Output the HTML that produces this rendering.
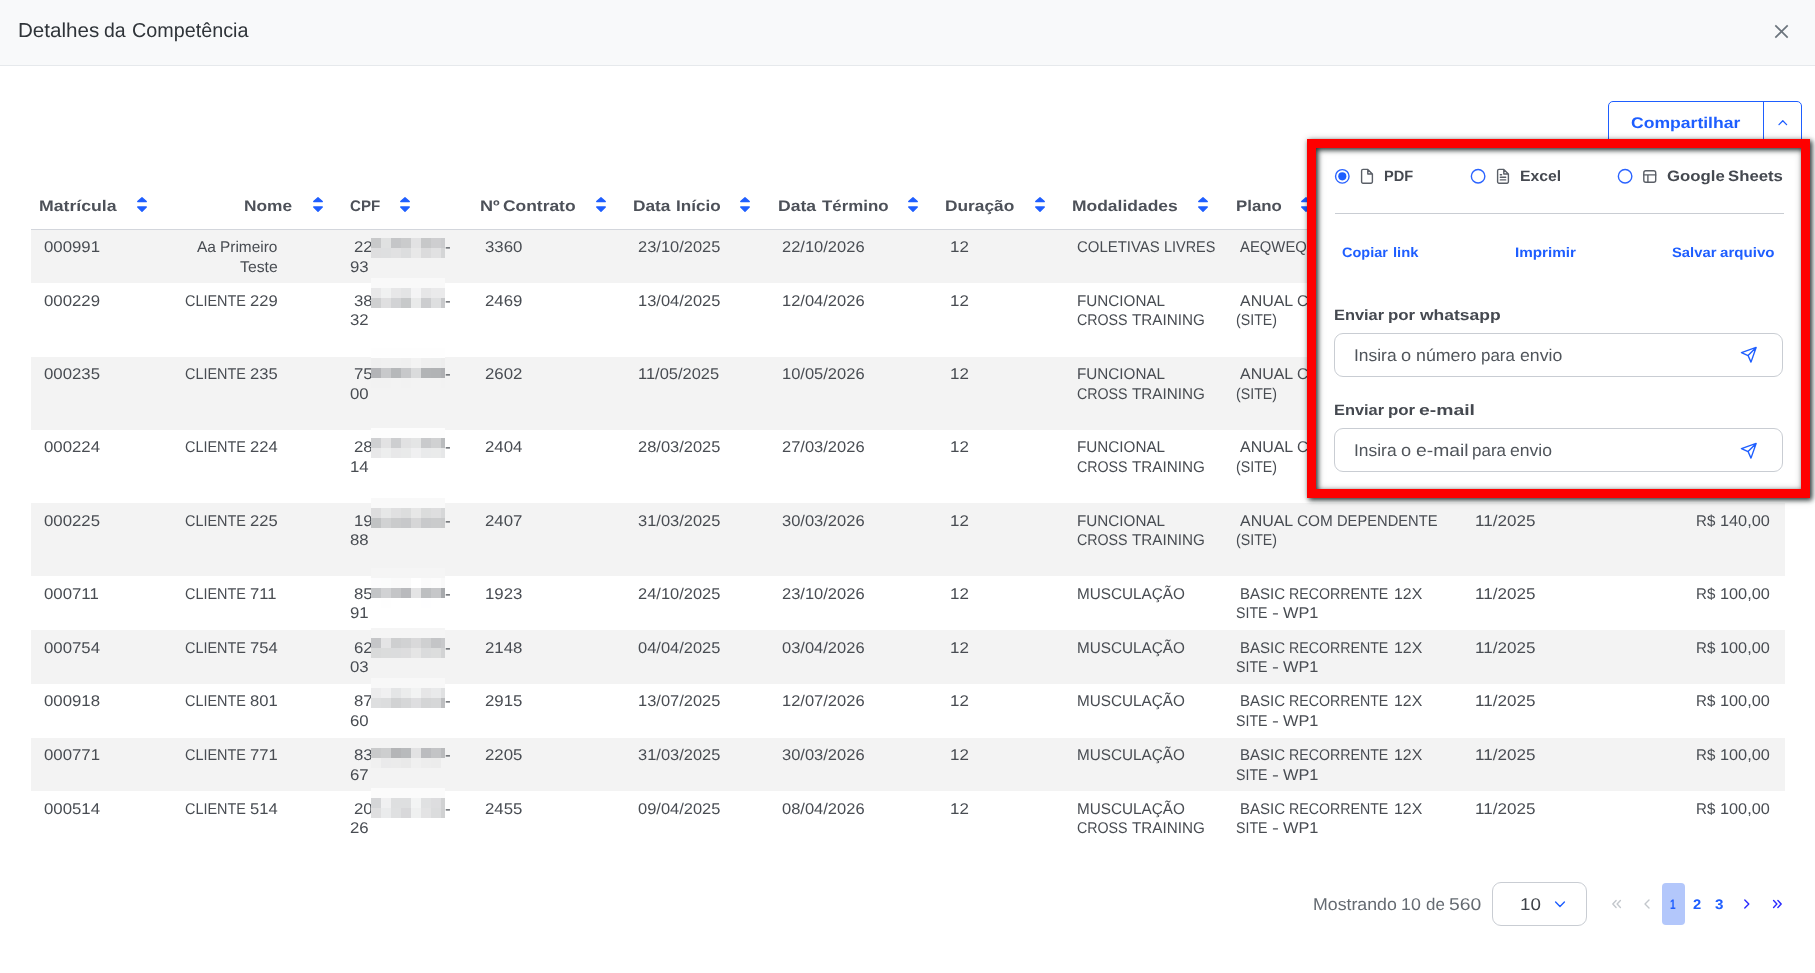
<!DOCTYPE html><html lang="pt-BR"><head><meta charset="utf-8"><title>Detalhes da Competência</title><style>
html,body{margin:0;padding:0}
body{width:1815px;height:973px;position:relative;overflow:hidden;background:#fff;font-family:"Liberation Sans",sans-serif;color:#4b4f55}
.a{position:absolute}
.t{position:absolute;white-space:pre;text-rendering:geometricPrecision;line-height:20px;transform-origin:0 50%;color:#484c52}
.mz i{position:absolute;display:block}
.pb{font-weight:bold}
.title{color:#2f3439}
.hd{color:#4d5159}
.blue{color:#1e5eff}
.lbl{color:#454950}
.ph{color:#50555b}
.most{color:#656b72}
.sel{color:#3f4349}
</style></head><body>
<header class="modal-header">
<div class="a" style="left:0;top:0;width:1815px;height:65px;background:#f8f9fa;border-bottom:1px solid #e6e9ec"></div>
<span class="t title" style="left:17.90px;top:21px;font-size:20.2px;transform:scaleX(1.0201);">Detalhes</span>
<span class="t title" style="left:104.12px;top:21px;font-size:20.2px;transform:scaleX(0.9647);">da</span>
<span class="t title" style="left:132.11px;top:21px;font-size:20.2px;transform:scaleX(0.9785);">Competência</span>
<svg class="a" style="left:1773px;top:23px" width="17" height="17" viewBox="0 0 17 17"><path d="M2.3 2.3 L14.7 14.7 M14.7 2.3 L2.3 14.7" stroke="#6c757d" stroke-width="1.7" fill="none"/></svg>
</header>
<div class="share-button">
<div class="a" style="left:1608px;top:101px;width:192px;height:44px;border:1px solid #1e5eff;border-radius:5px;background:#fff"></div>
<div class="a" style="left:1763px;top:101px;width:1px;height:44px;background:#1e5eff"></div>
<span class="t pb blue" style="left:1631.13px;top:114px;font-size:15.5px;transform:scaleX(1.1336);">Compartilhar</span>
<svg class="a" style="left:1775px;top:116px" width="16" height="12" viewBox="0 0 16 12"><path d="M4 8.6 L7.8 4.8 L11.6 8.6" stroke="#1e5eff" stroke-width="1.3" fill="none" stroke-linecap="round" stroke-linejoin="round"/></svg>
</div>
<main class="grid">
<div class="thead">
<span class="t pb hd" style="left:38.56px;top:197px;font-size:15.4px;transform:scaleX(1.1481);">Matrícula</span>
<span class="t pb hd" style="left:244.38px;top:197px;font-size:15.4px;transform:scaleX(1.1250);">Nome</span>
<span class="t pb hd" style="left:350.15px;top:197px;font-size:15.4px;transform:scaleX(0.9805);">CPF</span>
<span class="t pb hd" style="left:480.13px;top:197px;font-size:15.4px;transform:scaleX(1.1755);">Nº</span>
<span class="t pb hd" style="left:503.35px;top:197px;font-size:15.4px;transform:scaleX(1.1314);">Contrato</span>
<span class="t pb hd" style="left:632.98px;top:197px;font-size:15.4px;transform:scaleX(1.1236);">Data</span>
<span class="t pb hd" style="left:675.99px;top:197px;font-size:15.4px;transform:scaleX(1.1090);">Início</span>
<span class="t pb hd" style="left:777.86px;top:197px;font-size:15.4px;transform:scaleX(1.1421);">Data</span>
<span class="t pb hd" style="left:821.63px;top:197px;font-size:15.4px;transform:scaleX(1.0946);">Término</span>
<span class="t pb hd" style="left:945.48px;top:197px;font-size:15.4px;transform:scaleX(1.1250);">Duração</span>
<span class="t pb hd" style="left:1072.37px;top:197px;font-size:15.4px;transform:scaleX(1.1341);">Modalidades</span>
<span class="t pb hd" style="left:1235.71px;top:197px;font-size:15.4px;transform:scaleX(1.0927);">Plano</span>
<svg class="a" style="left:136.1px;top:195.5px" width="12" height="18" viewBox="0 0 12 18"><path d="M6 1.7 L10.3 5.6 H1.7 Z M6 15.4 L10.3 11 H1.7 Z" fill="#1e5eff" stroke="#1e5eff" stroke-width="1.3" stroke-linejoin="round"/></svg>
<svg class="a" style="left:311.5px;top:195.5px" width="12" height="18" viewBox="0 0 12 18"><path d="M6 1.7 L10.3 5.6 H1.7 Z M6 15.4 L10.3 11 H1.7 Z" fill="#1e5eff" stroke="#1e5eff" stroke-width="1.3" stroke-linejoin="round"/></svg>
<svg class="a" style="left:399.4px;top:195.5px" width="12" height="18" viewBox="0 0 12 18"><path d="M6 1.7 L10.3 5.6 H1.7 Z M6 15.4 L10.3 11 H1.7 Z" fill="#1e5eff" stroke="#1e5eff" stroke-width="1.3" stroke-linejoin="round"/></svg>
<svg class="a" style="left:594.7px;top:195.5px" width="12" height="18" viewBox="0 0 12 18"><path d="M6 1.7 L10.3 5.6 H1.7 Z M6 15.4 L10.3 11 H1.7 Z" fill="#1e5eff" stroke="#1e5eff" stroke-width="1.3" stroke-linejoin="round"/></svg>
<svg class="a" style="left:739.1px;top:195.5px" width="12" height="18" viewBox="0 0 12 18"><path d="M6 1.7 L10.3 5.6 H1.7 Z M6 15.4 L10.3 11 H1.7 Z" fill="#1e5eff" stroke="#1e5eff" stroke-width="1.3" stroke-linejoin="round"/></svg>
<svg class="a" style="left:906.9px;top:195.5px" width="12" height="18" viewBox="0 0 12 18"><path d="M6 1.7 L10.3 5.6 H1.7 Z M6 15.4 L10.3 11 H1.7 Z" fill="#1e5eff" stroke="#1e5eff" stroke-width="1.3" stroke-linejoin="round"/></svg>
<svg class="a" style="left:1034.0px;top:195.5px" width="12" height="18" viewBox="0 0 12 18"><path d="M6 1.7 L10.3 5.6 H1.7 Z M6 15.4 L10.3 11 H1.7 Z" fill="#1e5eff" stroke="#1e5eff" stroke-width="1.3" stroke-linejoin="round"/></svg>
<svg class="a" style="left:1196.9px;top:195.5px" width="12" height="18" viewBox="0 0 12 18"><path d="M6 1.7 L10.3 5.6 H1.7 Z M6 15.4 L10.3 11 H1.7 Z" fill="#1e5eff" stroke="#1e5eff" stroke-width="1.3" stroke-linejoin="round"/></svg>
<svg class="a" style="left:1300.0px;top:195.5px" width="12" height="18" viewBox="0 0 12 18"><path d="M6 1.7 L10.3 5.6 H1.7 Z M6 15.4 L10.3 11 H1.7 Z" fill="#1e5eff" stroke="#1e5eff" stroke-width="1.3" stroke-linejoin="round"/></svg>
<div class="a" style="left:31px;top:229px;width:1754px;height:1.3px;background:#d3d6dc"></div>
</div>
<div class="tr">
<div class="a" style="left:31px;top:230px;width:1754px;height:52.8px;background:#f3f3f3"></div>
<span class="t c" style="left:43.60px;top:238px;font-size:15.5px;transform:scaleX(1.0820);">000991</span>
<span class="t c" style="left:196.78px;top:238px;font-size:15.5px;transform:scaleX(1.0008);">Aa</span>
<span class="t c" style="left:220.48px;top:238px;font-size:15.5px;transform:scaleX(0.9943);">Primeiro</span>
<span class="t c" style="left:240.22px;top:258px;font-size:15.5px;transform:scaleX(1.0163);">Teste</span>
<span class="t c" style="left:354.47px;top:238px;font-size:15.5px;transform:scaleX(1.0820);">22</span>
<span class="t c" style="left:445.43px;top:238px;font-size:15.5px;transform:scaleX(1.1099);">-</span>
<span class="t c" style="left:349.79px;top:258px;font-size:15.5px;transform:scaleX(1.0820);">93</span>
<span class="t c" style="left:484.65px;top:238px;font-size:15.5px;transform:scaleX(1.0851);">3360</span>
<span class="t c" style="left:637.79px;top:238px;font-size:15.5px;transform:scaleX(1.0617);">23/10/2025</span>
<span class="t c" style="left:782.09px;top:238px;font-size:15.5px;transform:scaleX(1.0645);">22/10/2026</span>
<span class="t c" style="left:949.61px;top:238px;font-size:15.5px;transform:scaleX(1.0938);">12</span>
<span class="t c" style="left:1077.06px;top:238px;font-size:15.5px;transform:scaleX(0.9627);">COLETIVAS</span>
<span class="t c" style="left:1163.87px;top:238px;font-size:15.5px;transform:scaleX(0.9306);">LIVRES</span>
<span class="t c" style="left:1240.20px;top:238px;font-size:15.5px;transform:scaleX(0.9583);">AEQWEQ</span>
</div>
<div class="tr">
<span class="t c" style="left:43.60px;top:292px;font-size:15.5px;transform:scaleX(1.0820);">000229</span>
<span class="t c" style="left:185.18px;top:292px;font-size:15.5px;transform:scaleX(0.9303);">CLIENTE</span>
<span class="t c" style="left:250.08px;top:292px;font-size:15.5px;transform:scaleX(1.0698);">229</span>
<span class="t c" style="left:354.47px;top:292px;font-size:15.5px;transform:scaleX(1.0820);">38</span>
<span class="t c" style="left:445.43px;top:292px;font-size:15.5px;transform:scaleX(1.1099);">-</span>
<span class="t c" style="left:349.79px;top:311px;font-size:15.5px;transform:scaleX(1.0820);">32</span>
<span class="t c" style="left:484.65px;top:292px;font-size:15.5px;transform:scaleX(1.0851);">2469</span>
<span class="t c" style="left:637.79px;top:292px;font-size:15.5px;transform:scaleX(1.0617);">13/04/2025</span>
<span class="t c" style="left:782.09px;top:292px;font-size:15.5px;transform:scaleX(1.0645);">12/04/2026</span>
<span class="t c" style="left:949.61px;top:292px;font-size:15.5px;transform:scaleX(1.0938);">12</span>
<span class="t c" style="left:1077.00px;top:292px;font-size:15.5px;transform:scaleX(0.9827);">FUNCIONAL</span>
<span class="t c" style="left:1077.44px;top:311px;font-size:15.5px;transform:scaleX(0.9181);">CROSS</span>
<span class="t c" style="left:1132.04px;top:311px;font-size:15.5px;transform:scaleX(0.9827);">TRAINING</span>
<span class="t c" style="left:1240.17px;top:292px;font-size:15.5px;transform:scaleX(1.0289);">ANUAL</span>
<span class="t c" style="left:1297.24px;top:292px;font-size:15.5px;transform:scaleX(0.9900);">COM</span>
<span class="t c" style="left:1336.64px;top:292px;font-size:15.5px;transform:scaleX(0.9484);">DEPENDENTE</span>
<span class="t c" style="left:1236.39px;top:311px;font-size:15.5px;transform:scaleX(0.9152);">(SITE)</span>
<span class="t c" style="left:1474.81px;top:292px;font-size:15.5px;transform:scaleX(1.1007);">11/2025</span>
<span class="t c" style="left:1696.41px;top:292px;font-size:15.5px;transform:scaleX(0.9724);">R$</span>
<span class="t c" style="left:1720.07px;top:292px;font-size:15.5px;transform:scaleX(1.0504);">140,00</span>
</div>
<div class="tr">
<div class="a" style="left:31px;top:357px;width:1754px;height:73.0px;background:#f3f3f3"></div>
<span class="t c" style="left:43.60px;top:365px;font-size:15.5px;transform:scaleX(1.0820);">000235</span>
<span class="t c" style="left:185.18px;top:365px;font-size:15.5px;transform:scaleX(0.9303);">CLIENTE</span>
<span class="t c" style="left:250.08px;top:365px;font-size:15.5px;transform:scaleX(1.0698);">235</span>
<span class="t c" style="left:354.47px;top:365px;font-size:15.5px;transform:scaleX(1.0820);">75</span>
<span class="t c" style="left:445.43px;top:365px;font-size:15.5px;transform:scaleX(1.1099);">-</span>
<span class="t c" style="left:349.79px;top:385px;font-size:15.5px;transform:scaleX(1.0820);">00</span>
<span class="t c" style="left:484.65px;top:365px;font-size:15.5px;transform:scaleX(1.0851);">2602</span>
<span class="t c" style="left:637.79px;top:365px;font-size:15.5px;transform:scaleX(1.0617);">11/05/2025</span>
<span class="t c" style="left:782.09px;top:365px;font-size:15.5px;transform:scaleX(1.0645);">10/05/2026</span>
<span class="t c" style="left:949.61px;top:365px;font-size:15.5px;transform:scaleX(1.0938);">12</span>
<span class="t c" style="left:1077.00px;top:365px;font-size:15.5px;transform:scaleX(0.9827);">FUNCIONAL</span>
<span class="t c" style="left:1077.44px;top:385px;font-size:15.5px;transform:scaleX(0.9181);">CROSS</span>
<span class="t c" style="left:1132.04px;top:385px;font-size:15.5px;transform:scaleX(0.9827);">TRAINING</span>
<span class="t c" style="left:1240.17px;top:365px;font-size:15.5px;transform:scaleX(1.0289);">ANUAL</span>
<span class="t c" style="left:1297.24px;top:365px;font-size:15.5px;transform:scaleX(0.9900);">COM</span>
<span class="t c" style="left:1336.64px;top:365px;font-size:15.5px;transform:scaleX(0.9484);">DEPENDENTE</span>
<span class="t c" style="left:1236.39px;top:385px;font-size:15.5px;transform:scaleX(0.9152);">(SITE)</span>
<span class="t c" style="left:1474.81px;top:365px;font-size:15.5px;transform:scaleX(1.1007);">11/2025</span>
<span class="t c" style="left:1696.41px;top:365px;font-size:15.5px;transform:scaleX(0.9724);">R$</span>
<span class="t c" style="left:1720.07px;top:365px;font-size:15.5px;transform:scaleX(1.0504);">140,00</span>
</div>
<div class="tr">
<span class="t c" style="left:43.60px;top:438px;font-size:15.5px;transform:scaleX(1.0820);">000224</span>
<span class="t c" style="left:185.18px;top:438px;font-size:15.5px;transform:scaleX(0.9303);">CLIENTE</span>
<span class="t c" style="left:250.08px;top:438px;font-size:15.5px;transform:scaleX(1.0698);">224</span>
<span class="t c" style="left:354.47px;top:438px;font-size:15.5px;transform:scaleX(1.0820);">28</span>
<span class="t c" style="left:445.43px;top:438px;font-size:15.5px;transform:scaleX(1.1099);">-</span>
<span class="t c" style="left:349.79px;top:458px;font-size:15.5px;transform:scaleX(1.0820);">14</span>
<span class="t c" style="left:484.65px;top:438px;font-size:15.5px;transform:scaleX(1.0851);">2404</span>
<span class="t c" style="left:637.79px;top:438px;font-size:15.5px;transform:scaleX(1.0617);">28/03/2025</span>
<span class="t c" style="left:782.09px;top:438px;font-size:15.5px;transform:scaleX(1.0645);">27/03/2026</span>
<span class="t c" style="left:949.61px;top:438px;font-size:15.5px;transform:scaleX(1.0938);">12</span>
<span class="t c" style="left:1077.00px;top:438px;font-size:15.5px;transform:scaleX(0.9827);">FUNCIONAL</span>
<span class="t c" style="left:1077.44px;top:458px;font-size:15.5px;transform:scaleX(0.9181);">CROSS</span>
<span class="t c" style="left:1132.04px;top:458px;font-size:15.5px;transform:scaleX(0.9827);">TRAINING</span>
<span class="t c" style="left:1240.17px;top:438px;font-size:15.5px;transform:scaleX(1.0289);">ANUAL</span>
<span class="t c" style="left:1297.24px;top:438px;font-size:15.5px;transform:scaleX(0.9900);">COM</span>
<span class="t c" style="left:1336.64px;top:438px;font-size:15.5px;transform:scaleX(0.9484);">DEPENDENTE</span>
<span class="t c" style="left:1236.39px;top:458px;font-size:15.5px;transform:scaleX(0.9152);">(SITE)</span>
<span class="t c" style="left:1474.81px;top:438px;font-size:15.5px;transform:scaleX(1.1007);">11/2025</span>
<span class="t c" style="left:1696.41px;top:438px;font-size:15.5px;transform:scaleX(0.9724);">R$</span>
<span class="t c" style="left:1720.07px;top:438px;font-size:15.5px;transform:scaleX(1.0504);">140,00</span>
</div>
<div class="tr">
<div class="a" style="left:31px;top:503px;width:1754px;height:72.8px;background:#f3f3f3"></div>
<span class="t c" style="left:43.60px;top:512px;font-size:15.5px;transform:scaleX(1.0820);">000225</span>
<span class="t c" style="left:185.18px;top:512px;font-size:15.5px;transform:scaleX(0.9303);">CLIENTE</span>
<span class="t c" style="left:250.08px;top:512px;font-size:15.5px;transform:scaleX(1.0698);">225</span>
<span class="t c" style="left:354.47px;top:512px;font-size:15.5px;transform:scaleX(1.0820);">19</span>
<span class="t c" style="left:445.43px;top:512px;font-size:15.5px;transform:scaleX(1.1099);">-</span>
<span class="t c" style="left:349.79px;top:531px;font-size:15.5px;transform:scaleX(1.0820);">88</span>
<span class="t c" style="left:484.65px;top:512px;font-size:15.5px;transform:scaleX(1.0851);">2407</span>
<span class="t c" style="left:637.79px;top:512px;font-size:15.5px;transform:scaleX(1.0617);">31/03/2025</span>
<span class="t c" style="left:782.09px;top:512px;font-size:15.5px;transform:scaleX(1.0645);">30/03/2026</span>
<span class="t c" style="left:949.61px;top:512px;font-size:15.5px;transform:scaleX(1.0938);">12</span>
<span class="t c" style="left:1077.00px;top:512px;font-size:15.5px;transform:scaleX(0.9827);">FUNCIONAL</span>
<span class="t c" style="left:1077.44px;top:531px;font-size:15.5px;transform:scaleX(0.9181);">CROSS</span>
<span class="t c" style="left:1132.04px;top:531px;font-size:15.5px;transform:scaleX(0.9827);">TRAINING</span>
<span class="t c" style="left:1240.17px;top:512px;font-size:15.5px;transform:scaleX(1.0289);">ANUAL</span>
<span class="t c" style="left:1297.24px;top:512px;font-size:15.5px;transform:scaleX(0.9900);">COM</span>
<span class="t c" style="left:1336.64px;top:512px;font-size:15.5px;transform:scaleX(0.9484);">DEPENDENTE</span>
<span class="t c" style="left:1236.39px;top:531px;font-size:15.5px;transform:scaleX(0.9152);">(SITE)</span>
<span class="t c" style="left:1474.81px;top:512px;font-size:15.5px;transform:scaleX(1.1007);">11/2025</span>
<span class="t c" style="left:1696.41px;top:512px;font-size:15.5px;transform:scaleX(0.9724);">R$</span>
<span class="t c" style="left:1720.07px;top:512px;font-size:15.5px;transform:scaleX(1.0504);">140,00</span>
</div>
<div class="tr">
<span class="t c" style="left:43.60px;top:585px;font-size:15.5px;transform:scaleX(1.0820);">000711</span>
<span class="t c" style="left:185.18px;top:585px;font-size:15.5px;transform:scaleX(0.9303);">CLIENTE</span>
<span class="t c" style="left:250.08px;top:585px;font-size:15.5px;transform:scaleX(1.0698);">711</span>
<span class="t c" style="left:354.47px;top:585px;font-size:15.5px;transform:scaleX(1.0820);">85</span>
<span class="t c" style="left:445.43px;top:585px;font-size:15.5px;transform:scaleX(1.1099);">-</span>
<span class="t c" style="left:349.79px;top:604px;font-size:15.5px;transform:scaleX(1.0820);">91</span>
<span class="t c" style="left:484.65px;top:585px;font-size:15.5px;transform:scaleX(1.0851);">1923</span>
<span class="t c" style="left:637.79px;top:585px;font-size:15.5px;transform:scaleX(1.0617);">24/10/2025</span>
<span class="t c" style="left:782.09px;top:585px;font-size:15.5px;transform:scaleX(1.0645);">23/10/2026</span>
<span class="t c" style="left:949.61px;top:585px;font-size:15.5px;transform:scaleX(1.0938);">12</span>
<span class="t c" style="left:1076.79px;top:585px;font-size:15.5px;transform:scaleX(0.9861);">MUSCULAÇÃO</span>
<span class="t c" style="left:1240.31px;top:585px;font-size:15.5px;transform:scaleX(0.9698);">BASIC</span>
<span class="t c" style="left:1289.39px;top:585px;font-size:15.5px;transform:scaleX(0.9147);">RECORRENTE</span>
<span class="t c" style="left:1393.60px;top:585px;font-size:15.5px;transform:scaleX(1.0242);">12X</span>
<span class="t c" style="left:1235.99px;top:604px;font-size:15.5px;transform:scaleX(0.9134);">SITE</span>
<span class="t c" style="left:1271.56px;top:604px;font-size:15.5px;transform:scaleX(1.3319);">-</span>
<span class="t c" style="left:1282.74px;top:604px;font-size:15.5px;transform:scaleX(1.0557);">WP1</span>
<span class="t c" style="left:1474.81px;top:585px;font-size:15.5px;transform:scaleX(1.1007);">11/2025</span>
<span class="t c" style="left:1696.41px;top:585px;font-size:15.5px;transform:scaleX(0.9724);">R$</span>
<span class="t c" style="left:1720.07px;top:585px;font-size:15.5px;transform:scaleX(1.0504);">100,00</span>
</div>
<div class="tr">
<div class="a" style="left:31px;top:630px;width:1754px;height:54.0px;background:#f3f3f3"></div>
<span class="t c" style="left:43.60px;top:639px;font-size:15.5px;transform:scaleX(1.0820);">000754</span>
<span class="t c" style="left:185.18px;top:639px;font-size:15.5px;transform:scaleX(0.9303);">CLIENTE</span>
<span class="t c" style="left:250.08px;top:639px;font-size:15.5px;transform:scaleX(1.0698);">754</span>
<span class="t c" style="left:354.47px;top:639px;font-size:15.5px;transform:scaleX(1.0820);">62</span>
<span class="t c" style="left:445.43px;top:639px;font-size:15.5px;transform:scaleX(1.1099);">-</span>
<span class="t c" style="left:349.79px;top:658px;font-size:15.5px;transform:scaleX(1.0820);">03</span>
<span class="t c" style="left:484.65px;top:639px;font-size:15.5px;transform:scaleX(1.0851);">2148</span>
<span class="t c" style="left:637.79px;top:639px;font-size:15.5px;transform:scaleX(1.0617);">04/04/2025</span>
<span class="t c" style="left:782.09px;top:639px;font-size:15.5px;transform:scaleX(1.0645);">03/04/2026</span>
<span class="t c" style="left:949.61px;top:639px;font-size:15.5px;transform:scaleX(1.0938);">12</span>
<span class="t c" style="left:1076.79px;top:639px;font-size:15.5px;transform:scaleX(0.9861);">MUSCULAÇÃO</span>
<span class="t c" style="left:1240.31px;top:639px;font-size:15.5px;transform:scaleX(0.9698);">BASIC</span>
<span class="t c" style="left:1289.39px;top:639px;font-size:15.5px;transform:scaleX(0.9147);">RECORRENTE</span>
<span class="t c" style="left:1393.60px;top:639px;font-size:15.5px;transform:scaleX(1.0242);">12X</span>
<span class="t c" style="left:1235.99px;top:658px;font-size:15.5px;transform:scaleX(0.9134);">SITE</span>
<span class="t c" style="left:1271.56px;top:658px;font-size:15.5px;transform:scaleX(1.3319);">-</span>
<span class="t c" style="left:1282.74px;top:658px;font-size:15.5px;transform:scaleX(1.0557);">WP1</span>
<span class="t c" style="left:1474.81px;top:639px;font-size:15.5px;transform:scaleX(1.1007);">11/2025</span>
<span class="t c" style="left:1696.41px;top:639px;font-size:15.5px;transform:scaleX(0.9724);">R$</span>
<span class="t c" style="left:1720.07px;top:639px;font-size:15.5px;transform:scaleX(1.0504);">100,00</span>
</div>
<div class="tr">
<span class="t c" style="left:43.60px;top:692px;font-size:15.5px;transform:scaleX(1.0820);">000918</span>
<span class="t c" style="left:185.18px;top:692px;font-size:15.5px;transform:scaleX(0.9303);">CLIENTE</span>
<span class="t c" style="left:250.08px;top:692px;font-size:15.5px;transform:scaleX(1.0698);">801</span>
<span class="t c" style="left:354.47px;top:692px;font-size:15.5px;transform:scaleX(1.0820);">87</span>
<span class="t c" style="left:445.43px;top:692px;font-size:15.5px;transform:scaleX(1.1099);">-</span>
<span class="t c" style="left:349.79px;top:712px;font-size:15.5px;transform:scaleX(1.0820);">60</span>
<span class="t c" style="left:484.65px;top:692px;font-size:15.5px;transform:scaleX(1.0851);">2915</span>
<span class="t c" style="left:637.79px;top:692px;font-size:15.5px;transform:scaleX(1.0617);">13/07/2025</span>
<span class="t c" style="left:782.09px;top:692px;font-size:15.5px;transform:scaleX(1.0645);">12/07/2026</span>
<span class="t c" style="left:949.61px;top:692px;font-size:15.5px;transform:scaleX(1.0938);">12</span>
<span class="t c" style="left:1076.79px;top:692px;font-size:15.5px;transform:scaleX(0.9861);">MUSCULAÇÃO</span>
<span class="t c" style="left:1240.31px;top:692px;font-size:15.5px;transform:scaleX(0.9698);">BASIC</span>
<span class="t c" style="left:1289.39px;top:692px;font-size:15.5px;transform:scaleX(0.9147);">RECORRENTE</span>
<span class="t c" style="left:1393.60px;top:692px;font-size:15.5px;transform:scaleX(1.0242);">12X</span>
<span class="t c" style="left:1235.99px;top:712px;font-size:15.5px;transform:scaleX(0.9134);">SITE</span>
<span class="t c" style="left:1271.56px;top:712px;font-size:15.5px;transform:scaleX(1.3319);">-</span>
<span class="t c" style="left:1282.74px;top:712px;font-size:15.5px;transform:scaleX(1.0557);">WP1</span>
<span class="t c" style="left:1474.81px;top:692px;font-size:15.5px;transform:scaleX(1.1007);">11/2025</span>
<span class="t c" style="left:1696.41px;top:692px;font-size:15.5px;transform:scaleX(0.9724);">R$</span>
<span class="t c" style="left:1720.07px;top:692px;font-size:15.5px;transform:scaleX(1.0504);">100,00</span>
</div>
<div class="tr">
<div class="a" style="left:31px;top:738px;width:1754px;height:52.8px;background:#f3f3f3"></div>
<span class="t c" style="left:43.60px;top:746px;font-size:15.5px;transform:scaleX(1.0820);">000771</span>
<span class="t c" style="left:185.18px;top:746px;font-size:15.5px;transform:scaleX(0.9303);">CLIENTE</span>
<span class="t c" style="left:250.08px;top:746px;font-size:15.5px;transform:scaleX(1.0698);">771</span>
<span class="t c" style="left:354.47px;top:746px;font-size:15.5px;transform:scaleX(1.0820);">83</span>
<span class="t c" style="left:445.43px;top:746px;font-size:15.5px;transform:scaleX(1.1099);">-</span>
<span class="t c" style="left:349.79px;top:766px;font-size:15.5px;transform:scaleX(1.0820);">67</span>
<span class="t c" style="left:484.65px;top:746px;font-size:15.5px;transform:scaleX(1.0851);">2205</span>
<span class="t c" style="left:637.79px;top:746px;font-size:15.5px;transform:scaleX(1.0617);">31/03/2025</span>
<span class="t c" style="left:782.09px;top:746px;font-size:15.5px;transform:scaleX(1.0645);">30/03/2026</span>
<span class="t c" style="left:949.61px;top:746px;font-size:15.5px;transform:scaleX(1.0938);">12</span>
<span class="t c" style="left:1076.79px;top:746px;font-size:15.5px;transform:scaleX(0.9861);">MUSCULAÇÃO</span>
<span class="t c" style="left:1240.31px;top:746px;font-size:15.5px;transform:scaleX(0.9698);">BASIC</span>
<span class="t c" style="left:1289.39px;top:746px;font-size:15.5px;transform:scaleX(0.9147);">RECORRENTE</span>
<span class="t c" style="left:1393.60px;top:746px;font-size:15.5px;transform:scaleX(1.0242);">12X</span>
<span class="t c" style="left:1235.99px;top:766px;font-size:15.5px;transform:scaleX(0.9134);">SITE</span>
<span class="t c" style="left:1271.56px;top:766px;font-size:15.5px;transform:scaleX(1.3319);">-</span>
<span class="t c" style="left:1282.74px;top:766px;font-size:15.5px;transform:scaleX(1.0557);">WP1</span>
<span class="t c" style="left:1474.81px;top:746px;font-size:15.5px;transform:scaleX(1.1007);">11/2025</span>
<span class="t c" style="left:1696.41px;top:746px;font-size:15.5px;transform:scaleX(0.9724);">R$</span>
<span class="t c" style="left:1720.07px;top:746px;font-size:15.5px;transform:scaleX(1.0504);">100,00</span>
</div>
<div class="tr">
<span class="t c" style="left:43.60px;top:800px;font-size:15.5px;transform:scaleX(1.0820);">000514</span>
<span class="t c" style="left:185.18px;top:800px;font-size:15.5px;transform:scaleX(0.9303);">CLIENTE</span>
<span class="t c" style="left:250.08px;top:800px;font-size:15.5px;transform:scaleX(1.0698);">514</span>
<span class="t c" style="left:354.47px;top:800px;font-size:15.5px;transform:scaleX(1.0820);">20</span>
<span class="t c" style="left:445.43px;top:800px;font-size:15.5px;transform:scaleX(1.1099);">-</span>
<span class="t c" style="left:349.79px;top:819px;font-size:15.5px;transform:scaleX(1.0820);">26</span>
<span class="t c" style="left:484.65px;top:800px;font-size:15.5px;transform:scaleX(1.0851);">2455</span>
<span class="t c" style="left:637.79px;top:800px;font-size:15.5px;transform:scaleX(1.0617);">09/04/2025</span>
<span class="t c" style="left:782.09px;top:800px;font-size:15.5px;transform:scaleX(1.0645);">08/04/2026</span>
<span class="t c" style="left:949.61px;top:800px;font-size:15.5px;transform:scaleX(1.0938);">12</span>
<span class="t c" style="left:1076.79px;top:800px;font-size:15.5px;transform:scaleX(0.9861);">MUSCULAÇÃO</span>
<span class="t c" style="left:1077.44px;top:819px;font-size:15.5px;transform:scaleX(0.9181);">CROSS</span>
<span class="t c" style="left:1132.04px;top:819px;font-size:15.5px;transform:scaleX(0.9827);">TRAINING</span>
<span class="t c" style="left:1240.31px;top:800px;font-size:15.5px;transform:scaleX(0.9698);">BASIC</span>
<span class="t c" style="left:1289.39px;top:800px;font-size:15.5px;transform:scaleX(0.9147);">RECORRENTE</span>
<span class="t c" style="left:1393.60px;top:800px;font-size:15.5px;transform:scaleX(1.0242);">12X</span>
<span class="t c" style="left:1235.99px;top:819px;font-size:15.5px;transform:scaleX(0.9134);">SITE</span>
<span class="t c" style="left:1271.56px;top:819px;font-size:15.5px;transform:scaleX(1.3319);">-</span>
<span class="t c" style="left:1282.74px;top:819px;font-size:15.5px;transform:scaleX(1.0557);">WP1</span>
<span class="t c" style="left:1474.81px;top:800px;font-size:15.5px;transform:scaleX(1.1007);">11/2025</span>
<span class="t c" style="left:1696.41px;top:800px;font-size:15.5px;transform:scaleX(0.9724);">R$</span>
<span class="t c" style="left:1720.07px;top:800px;font-size:15.5px;transform:scaleX(1.0504);">100,00</span>
</div>
<div class="mz"><i style="left:371px;top:238px;width:10px;height:10px;background:#c8c9ca"></i><i style="left:381px;top:238px;width:10px;height:10px;background:#e0e1e1"></i><i style="left:391px;top:238px;width:10px;height:10px;background:#c5c6c8"></i><i style="left:401px;top:238px;width:10px;height:10px;background:#cacbcc"></i><i style="left:411px;top:238px;width:10px;height:10px;background:#e2e2e3"></i><i style="left:421px;top:238px;width:10px;height:10px;background:#c7c8c9"></i><i style="left:431px;top:238px;width:10px;height:10px;background:#ceced0"></i><i style="left:441px;top:238px;width:4px;height:10px;background:#cacbcd"></i><i style="left:371px;top:248px;width:10px;height:10px;background:#dededf"></i><i style="left:381px;top:248px;width:10px;height:10px;background:#dedfe0"></i><i style="left:391px;top:248px;width:10px;height:10px;background:#e1e1e2"></i><i style="left:401px;top:248px;width:10px;height:10px;background:#dcddde"></i><i style="left:411px;top:248px;width:10px;height:10px;background:#e8e8e8"></i><i style="left:421px;top:248px;width:10px;height:10px;background:#dbdbdc"></i><i style="left:431px;top:248px;width:10px;height:10px;background:#e1e1e2"></i><i style="left:441px;top:248px;width:4px;height:10px;background:#d4d5d6"></i><i style="left:371px;top:278px;width:10px;height:10px;background:#f9f9f9"></i><i style="left:381px;top:278px;width:10px;height:10px;background:#f9f9f9"></i><i style="left:391px;top:278px;width:10px;height:10px;background:#f9f9f9"></i><i style="left:401px;top:278px;width:10px;height:10px;background:#f9f9f9"></i><i style="left:411px;top:278px;width:10px;height:10px;background:#f9f9f9"></i><i style="left:421px;top:278px;width:10px;height:10px;background:#f9f9f9"></i><i style="left:431px;top:278px;width:10px;height:10px;background:#f9f9f9"></i><i style="left:441px;top:278px;width:4px;height:10px;background:#f9f9f9"></i><i style="left:371px;top:288px;width:10px;height:10px;background:#e8e8e9"></i><i style="left:381px;top:288px;width:10px;height:10px;background:#f0f1f1"></i><i style="left:391px;top:288px;width:10px;height:10px;background:#e7e7e8"></i><i style="left:401px;top:288px;width:10px;height:10px;background:#e3e4e5"></i><i style="left:411px;top:288px;width:10px;height:10px;background:#f4f4f5"></i><i style="left:421px;top:288px;width:10px;height:10px;background:#e6e6e7"></i><i style="left:431px;top:288px;width:10px;height:10px;background:#eaeaeb"></i><i style="left:441px;top:288px;width:4px;height:10px;background:#eaeaeb"></i><i style="left:371px;top:298px;width:10px;height:10px;background:#cfd0d1"></i><i style="left:381px;top:298px;width:10px;height:10px;background:#dfdfe0"></i><i style="left:391px;top:298px;width:10px;height:10px;background:#d2d3d5"></i><i style="left:401px;top:298px;width:10px;height:10px;background:#c7c9ca"></i><i style="left:411px;top:298px;width:10px;height:10px;background:#e9eaea"></i><i style="left:421px;top:298px;width:10px;height:10px;background:#cccdcf"></i><i style="left:431px;top:298px;width:10px;height:10px;background:#dedfe0"></i><i style="left:441px;top:298px;width:4px;height:10px;background:#c8c9cb"></i><i style="left:371px;top:348px;width:10px;height:10px;background:#fefefe"></i><i style="left:381px;top:348px;width:10px;height:10px;background:#fefefe"></i><i style="left:391px;top:348px;width:10px;height:10px;background:#fefefe"></i><i style="left:401px;top:348px;width:10px;height:10px;background:#fefefe"></i><i style="left:411px;top:348px;width:10px;height:10px;background:#fefefe"></i><i style="left:421px;top:348px;width:10px;height:10px;background:#fefefe"></i><i style="left:431px;top:348px;width:10px;height:10px;background:#fefefe"></i><i style="left:441px;top:348px;width:4px;height:10px;background:#fefefe"></i><i style="left:371px;top:358px;width:10px;height:10px;background:#efefef"></i><i style="left:381px;top:358px;width:10px;height:10px;background:#f0f0f0"></i><i style="left:391px;top:358px;width:10px;height:10px;background:#f0f0f0"></i><i style="left:401px;top:358px;width:10px;height:10px;background:#efefef"></i><i style="left:421px;top:358px;width:10px;height:10px;background:#efefef"></i><i style="left:431px;top:358px;width:10px;height:10px;background:#eeefef"></i><i style="left:441px;top:358px;width:4px;height:10px;background:#ededed"></i><i style="left:371px;top:368px;width:10px;height:10px;background:#b3b4b7"></i><i style="left:381px;top:368px;width:10px;height:10px;background:#c8c9cb"></i><i style="left:391px;top:368px;width:10px;height:10px;background:#b6b8ba"></i><i style="left:401px;top:368px;width:10px;height:10px;background:#c7c8ca"></i><i style="left:411px;top:368px;width:10px;height:10px;background:#dadbdc"></i><i style="left:421px;top:368px;width:10px;height:10px;background:#b2b4b6"></i><i style="left:431px;top:368px;width:10px;height:10px;background:#b1b3b5"></i><i style="left:441px;top:368px;width:4px;height:10px;background:#adaeb1"></i><i style="left:371px;top:378px;width:10px;height:10px;background:#f2f2f2"></i><i style="left:381px;top:378px;width:10px;height:10px;background:#f2f2f2"></i><i style="left:391px;top:378px;width:10px;height:10px;background:#f3f3f3"></i><i style="left:401px;top:378px;width:10px;height:10px;background:#f2f2f2"></i><i style="left:431px;top:378px;width:10px;height:10px;background:#f3f3f3"></i><i style="left:441px;top:378px;width:4px;height:10px;background:#f2f2f2"></i><i style="left:371px;top:428px;width:10px;height:10px;background:#fdfdfd"></i><i style="left:381px;top:428px;width:10px;height:10px;background:#fdfdfd"></i><i style="left:391px;top:428px;width:10px;height:10px;background:#fdfdfd"></i><i style="left:401px;top:428px;width:10px;height:10px;background:#fdfdfd"></i><i style="left:411px;top:428px;width:10px;height:10px;background:#fdfdfd"></i><i style="left:421px;top:428px;width:10px;height:10px;background:#fdfdfd"></i><i style="left:431px;top:428px;width:10px;height:10px;background:#fdfdfd"></i><i style="left:441px;top:428px;width:4px;height:10px;background:#fdfdfd"></i><i style="left:371px;top:438px;width:10px;height:10px;background:#cfd0d2"></i><i style="left:381px;top:438px;width:10px;height:10px;background:#e2e2e3"></i><i style="left:391px;top:438px;width:10px;height:10px;background:#cdced0"></i><i style="left:401px;top:438px;width:10px;height:10px;background:#e1e1e2"></i><i style="left:411px;top:438px;width:10px;height:10px;background:#e4e5e5"></i><i style="left:421px;top:438px;width:10px;height:10px;background:#c9cacc"></i><i style="left:431px;top:438px;width:10px;height:10px;background:#d0d1d2"></i><i style="left:441px;top:438px;width:4px;height:10px;background:#babcbe"></i><i style="left:371px;top:448px;width:10px;height:10px;background:#e8e8e9"></i><i style="left:381px;top:448px;width:10px;height:10px;background:#edeeee"></i><i style="left:391px;top:448px;width:10px;height:10px;background:#e8e8e9"></i><i style="left:401px;top:448px;width:10px;height:10px;background:#e9eaea"></i><i style="left:411px;top:448px;width:10px;height:10px;background:#f0f0f1"></i><i style="left:421px;top:448px;width:10px;height:10px;background:#e9eaeb"></i><i style="left:431px;top:448px;width:10px;height:10px;background:#eaebeb"></i><i style="left:441px;top:448px;width:4px;height:10px;background:#e6e7e8"></i><i style="left:371px;top:498px;width:10px;height:10px;background:#f9f9f9"></i><i style="left:381px;top:498px;width:10px;height:10px;background:#f9f9f9"></i><i style="left:391px;top:498px;width:10px;height:10px;background:#f9f9f9"></i><i style="left:401px;top:498px;width:10px;height:10px;background:#f9f9f9"></i><i style="left:411px;top:498px;width:10px;height:10px;background:#f9f9f9"></i><i style="left:421px;top:498px;width:10px;height:10px;background:#f9f9f9"></i><i style="left:431px;top:498px;width:10px;height:10px;background:#f9f9f9"></i><i style="left:441px;top:498px;width:4px;height:10px;background:#f9f9f9"></i><i style="left:371px;top:508px;width:10px;height:10px;background:#ddddde"></i><i style="left:381px;top:508px;width:10px;height:10px;background:#e6e7e7"></i><i style="left:391px;top:508px;width:10px;height:10px;background:#e0e0e1"></i><i style="left:401px;top:508px;width:10px;height:10px;background:#dcdddd"></i><i style="left:411px;top:508px;width:10px;height:10px;background:#e7e7e7"></i><i style="left:421px;top:508px;width:10px;height:10px;background:#dbdcdc"></i><i style="left:431px;top:508px;width:10px;height:10px;background:#dededf"></i><i style="left:441px;top:508px;width:4px;height:10px;background:#d6d7d8"></i><i style="left:371px;top:518px;width:10px;height:10px;background:#c1c3c4"></i><i style="left:381px;top:518px;width:10px;height:10px;background:#d1d2d3"></i><i style="left:391px;top:518px;width:10px;height:10px;background:#cacbcc"></i><i style="left:401px;top:518px;width:10px;height:10px;background:#c7c8ca"></i><i style="left:411px;top:518px;width:10px;height:10px;background:#d6d6d7"></i><i style="left:421px;top:518px;width:10px;height:10px;background:#c8c9cb"></i><i style="left:431px;top:518px;width:10px;height:10px;background:#cacbcc"></i><i style="left:441px;top:518px;width:4px;height:10px;background:#c8c9ca"></i><i style="left:371px;top:568px;width:10px;height:10px;background:#f5f5f5"></i><i style="left:381px;top:568px;width:10px;height:10px;background:#f5f5f5"></i><i style="left:391px;top:568px;width:10px;height:10px;background:#f5f5f5"></i><i style="left:401px;top:568px;width:10px;height:10px;background:#f5f5f5"></i><i style="left:411px;top:568px;width:10px;height:10px;background:#f5f5f5"></i><i style="left:421px;top:568px;width:10px;height:10px;background:#f5f5f5"></i><i style="left:431px;top:568px;width:10px;height:10px;background:#f5f5f5"></i><i style="left:441px;top:568px;width:4px;height:10px;background:#f5f5f5"></i><i style="left:371px;top:578px;width:10px;height:10px;background:#fcfcfd"></i><i style="left:381px;top:578px;width:10px;height:10px;background:#fbfcfc"></i><i style="left:391px;top:578px;width:10px;height:10px;background:#fafafa"></i><i style="left:401px;top:578px;width:10px;height:10px;background:#fafafa"></i><i style="left:421px;top:578px;width:10px;height:10px;background:#fbfbfb"></i><i style="left:431px;top:578px;width:10px;height:10px;background:#fcfcfc"></i><i style="left:441px;top:578px;width:4px;height:10px;background:#f9f9f9"></i><i style="left:371px;top:588px;width:10px;height:10px;background:#c3c5c7"></i><i style="left:381px;top:588px;width:10px;height:10px;background:#d1d2d4"></i><i style="left:391px;top:588px;width:10px;height:10px;background:#c4c5c7"></i><i style="left:401px;top:588px;width:10px;height:10px;background:#b9babd"></i><i style="left:411px;top:588px;width:10px;height:10px;background:#e4e4e5"></i><i style="left:421px;top:588px;width:10px;height:10px;background:#bdbfc1"></i><i style="left:431px;top:588px;width:10px;height:10px;background:#c6c7c9"></i><i style="left:441px;top:588px;width:4px;height:10px;background:#a7a9ac"></i><i style="left:381px;top:598px;width:10px;height:10px;background:#fefefe"></i><i style="left:391px;top:598px;width:10px;height:10px;background:#ffffff"></i><i style="left:401px;top:598px;width:10px;height:10px;background:#ffffff"></i><i style="left:421px;top:598px;width:10px;height:10px;background:#fefeff"></i><i style="left:431px;top:598px;width:10px;height:10px;background:#ffffff"></i><i style="left:371px;top:628px;width:10px;height:10px;background:#f5f5f5"></i><i style="left:381px;top:628px;width:10px;height:10px;background:#f5f5f5"></i><i style="left:391px;top:628px;width:10px;height:10px;background:#f5f5f5"></i><i style="left:401px;top:628px;width:10px;height:10px;background:#f5f5f5"></i><i style="left:411px;top:628px;width:10px;height:10px;background:#f5f5f5"></i><i style="left:421px;top:628px;width:10px;height:10px;background:#f5f5f5"></i><i style="left:431px;top:628px;width:10px;height:10px;background:#f5f5f5"></i><i style="left:441px;top:628px;width:4px;height:10px;background:#f5f5f5"></i><i style="left:371px;top:638px;width:10px;height:10px;background:#c5c6c8"></i><i style="left:381px;top:638px;width:10px;height:10px;background:#e4e4e5"></i><i style="left:391px;top:638px;width:10px;height:10px;background:#cecfd0"></i><i style="left:401px;top:638px;width:10px;height:10px;background:#d1d2d3"></i><i style="left:411px;top:638px;width:10px;height:10px;background:#d9d9da"></i><i style="left:421px;top:638px;width:10px;height:10px;background:#cfd0d1"></i><i style="left:431px;top:638px;width:10px;height:10px;background:#c4c5c7"></i><i style="left:441px;top:638px;width:4px;height:10px;background:#c8c9cb"></i><i style="left:371px;top:648px;width:10px;height:10px;background:#d9dada"></i><i style="left:381px;top:648px;width:10px;height:10px;background:#dbdcdc"></i><i style="left:391px;top:648px;width:10px;height:10px;background:#dbdcdd"></i><i style="left:401px;top:648px;width:10px;height:10px;background:#ddddde"></i><i style="left:411px;top:648px;width:10px;height:10px;background:#e5e5e5"></i><i style="left:421px;top:648px;width:10px;height:10px;background:#dadbdc"></i><i style="left:431px;top:648px;width:10px;height:10px;background:#dcdddd"></i><i style="left:441px;top:648px;width:4px;height:10px;background:#d2d3d4"></i><i style="left:371px;top:678px;width:10px;height:10px;background:#f8f8f8"></i><i style="left:381px;top:678px;width:10px;height:10px;background:#f8f8f8"></i><i style="left:391px;top:678px;width:10px;height:10px;background:#f8f8f8"></i><i style="left:401px;top:678px;width:10px;height:10px;background:#f8f8f8"></i><i style="left:411px;top:678px;width:10px;height:10px;background:#f8f8f8"></i><i style="left:421px;top:678px;width:10px;height:10px;background:#f8f8f8"></i><i style="left:431px;top:678px;width:10px;height:10px;background:#f8f8f8"></i><i style="left:441px;top:678px;width:4px;height:10px;background:#f8f8f8"></i><i style="left:371px;top:688px;width:10px;height:10px;background:#ececed"></i><i style="left:381px;top:688px;width:10px;height:10px;background:#f0f0f1"></i><i style="left:391px;top:688px;width:10px;height:10px;background:#e4e5e6"></i><i style="left:401px;top:688px;width:10px;height:10px;background:#ebecec"></i><i style="left:411px;top:688px;width:10px;height:10px;background:#f2f3f3"></i><i style="left:421px;top:688px;width:10px;height:10px;background:#e6e6e7"></i><i style="left:431px;top:688px;width:10px;height:10px;background:#e9eaeb"></i><i style="left:441px;top:688px;width:4px;height:10px;background:#e0e1e2"></i><i style="left:371px;top:698px;width:10px;height:10px;background:#dedfe0"></i><i style="left:381px;top:698px;width:10px;height:10px;background:#dcddde"></i><i style="left:391px;top:698px;width:10px;height:10px;background:#d1d2d3"></i><i style="left:401px;top:698px;width:10px;height:10px;background:#d6d7d8"></i><i style="left:411px;top:698px;width:10px;height:10px;background:#dedee0"></i><i style="left:421px;top:698px;width:10px;height:10px;background:#d4d5d6"></i><i style="left:431px;top:698px;width:10px;height:10px;background:#d6d7d8"></i><i style="left:441px;top:698px;width:4px;height:10px;background:#bdbec0"></i><i style="left:371px;top:748px;width:10px;height:10px;background:#c9cacb"></i><i style="left:381px;top:748px;width:10px;height:10px;background:#cdcecf"></i><i style="left:391px;top:748px;width:10px;height:10px;background:#b4b5b7"></i><i style="left:401px;top:748px;width:10px;height:10px;background:#b8babc"></i><i style="left:411px;top:748px;width:10px;height:10px;background:#e2e2e3"></i><i style="left:421px;top:748px;width:10px;height:10px;background:#bbbcbf"></i><i style="left:431px;top:748px;width:10px;height:10px;background:#c3c4c6"></i><i style="left:441px;top:748px;width:4px;height:10px;background:#b9babc"></i><i style="left:371px;top:758px;width:10px;height:10px;background:#f0f0f0"></i><i style="left:381px;top:758px;width:10px;height:10px;background:#eaeaeb"></i><i style="left:391px;top:758px;width:10px;height:10px;background:#ebebeb"></i><i style="left:401px;top:758px;width:10px;height:10px;background:#e9e9e9"></i><i style="left:411px;top:758px;width:10px;height:10px;background:#f0f0f0"></i><i style="left:421px;top:758px;width:10px;height:10px;background:#ededed"></i><i style="left:431px;top:758px;width:10px;height:10px;background:#ececec"></i><i style="left:441px;top:758px;width:4px;height:10px;background:#f3f3f3"></i><i style="left:371px;top:788px;width:10px;height:10px;background:#fbfbfb"></i><i style="left:381px;top:788px;width:10px;height:10px;background:#fbfbfb"></i><i style="left:391px;top:788px;width:10px;height:10px;background:#fbfbfb"></i><i style="left:401px;top:788px;width:10px;height:10px;background:#fbfbfb"></i><i style="left:411px;top:788px;width:10px;height:10px;background:#fbfbfb"></i><i style="left:421px;top:788px;width:10px;height:10px;background:#fbfbfb"></i><i style="left:431px;top:788px;width:10px;height:10px;background:#fbfbfb"></i><i style="left:441px;top:788px;width:4px;height:10px;background:#fbfbfb"></i><i style="left:371px;top:798px;width:10px;height:10px;background:#d5d6d8"></i><i style="left:381px;top:798px;width:10px;height:10px;background:#f0f0f1"></i><i style="left:391px;top:798px;width:10px;height:10px;background:#dedfe0"></i><i style="left:401px;top:798px;width:10px;height:10px;background:#dedfe0"></i><i style="left:411px;top:798px;width:10px;height:10px;background:#f3f4f4"></i><i style="left:421px;top:798px;width:10px;height:10px;background:#e0e1e2"></i><i style="left:431px;top:798px;width:10px;height:10px;background:#dddddf"></i><i style="left:441px;top:798px;width:4px;height:10px;background:#d1d2d3"></i><i style="left:371px;top:808px;width:10px;height:10px;background:#dfdfe0"></i><i style="left:381px;top:808px;width:10px;height:10px;background:#eaebec"></i><i style="left:391px;top:808px;width:10px;height:10px;background:#dfe0e1"></i><i style="left:401px;top:808px;width:10px;height:10px;background:#d8d8da"></i><i style="left:411px;top:808px;width:10px;height:10px;background:#eff0f0"></i><i style="left:421px;top:808px;width:10px;height:10px;background:#e3e3e4"></i><i style="left:431px;top:808px;width:10px;height:10px;background:#dbdcdd"></i><i style="left:441px;top:808px;width:4px;height:10px;background:#d0d1d2"></i></div>
</main>
<section class="share-popup">
<div class="a" style="left:1312px;top:144px;width:494px;height:350px;background:#fff"></div>
<svg class="a" style="left:1333px;top:167px" width="18" height="18" viewBox="0 0 18 18"><circle cx="9.3" cy="9.35" r="6.75" fill="#fff" stroke="#2a63ff" stroke-width="1.4"/><circle cx="9.3" cy="9.35" r="4.05" fill="#1e5eff"/></svg>
<svg class="a" style="left:1468.5px;top:167.2px" width="18" height="18" viewBox="0 0 18 18"><circle cx="9.1" cy="9.2" r="6.75" fill="#fff" stroke="#2a63ff" stroke-width="1.4"/></svg>
<svg class="a" style="left:1615.7px;top:167.2px" width="18" height="18" viewBox="0 0 18 18"><circle cx="9.1" cy="9.2" r="6.75" fill="#fff" stroke="#2a63ff" stroke-width="1.4"/></svg>
<svg class="a" style="left:1359px;top:167.5px" width="16" height="18" viewBox="0 0 16 18"><path d="M8.8 1.4 H4 a1.4 1.4 0 0 0 -1.4 1.4 V13.8 a1.4 1.4 0 0 0 1.4 1.4 h8 a1.4 1.4 0 0 0 1.4 -1.4 V6 Z M8.8 1.4 V6 H13.4" stroke="#5a5f67" stroke-width="1.4" fill="none" stroke-linecap="round" stroke-linejoin="round"/></svg>
<svg class="a" style="left:1495px;top:167.5px" width="16" height="18" viewBox="0 0 16 18"><path d="M8.8 1.4 H4 a1.4 1.4 0 0 0 -1.4 1.4 V13.8 a1.4 1.4 0 0 0 1.4 1.4 h8 a1.4 1.4 0 0 0 1.4 -1.4 V6 Z M8.8 1.4 V6 H13.4 M5.3 9.3 H10.7 M5.3 11.9 H10.7 M5.3 6.7 H6.6" stroke="#5a5f67" stroke-width="1.4" fill="none" stroke-linecap="round" stroke-linejoin="round"/></svg>
<svg class="a" style="left:1642px;top:167.5px" width="16" height="18" viewBox="0 0 16 18"><rect x="1.8" y="2.8" width="11.9" height="11.5" rx="2" stroke="#5a5f67" stroke-width="1.4" fill="none" stroke-linecap="round" stroke-linejoin="round"/><path d="M1.8 6.9 H13.7 M5.9 6.9 V14.3" stroke="#5a5f67" stroke-width="1.4" fill="none" stroke-linecap="round" stroke-linejoin="round"/></svg>
<div class="a" style="left:1334.5px;top:213px;width:449px;height:1px;background:#c9cdd3"></div>
<div class="a" style="left:1334px;top:333.3px;width:447.3px;height:41.5px;border:1px solid #c9cdd3;border-radius:9px;background:#fff"></div>
<svg class="a" style="left:1740.1px;top:346.1px" width="17.6" height="17.6" viewBox="0 0 24 24"><path d="M22 2 L11 13 M22 2 L15 22 L11 13 L2 9 Z" stroke="#1e5eff" stroke-width="1.9" fill="none" stroke-linecap="round" stroke-linejoin="round"/></svg>
<div class="a" style="left:1334px;top:428.1px;width:447.3px;height:41.5px;border:1px solid #c9cdd3;border-radius:9px;background:#fff"></div>
<svg class="a" style="left:1740.1px;top:441.9px" width="17.6" height="17.6" viewBox="0 0 24 24"><path d="M22 2 L11 13 M22 2 L15 22 L11 13 L2 9 Z" stroke="#1e5eff" stroke-width="1.9" fill="none" stroke-linecap="round" stroke-linejoin="round"/></svg>
<span class="t pb lbl" style="left:1384.42px;top:167px;font-size:15px;transform:scaleX(0.9739);">PDF</span>
<span class="t pb lbl" style="left:1520.05px;top:167px;font-size:15px;transform:scaleX(1.0498);">Excel</span>
<span class="t pb lbl" style="left:1666.66px;top:167px;font-size:15px;transform:scaleX(1.1182);">Google</span>
<span class="t pb lbl" style="left:1728.33px;top:167px;font-size:15px;transform:scaleX(1.1161);">Sheets</span>
<span class="t pb blue" style="left:1342.46px;top:243px;font-size:13.7px;transform:scaleX(1.0575);">Copiar</span>
<span class="t pb blue" style="left:1392.75px;top:243px;font-size:13.7px;transform:scaleX(1.0825);">link</span>
<span class="t pb blue" style="left:1514.65px;top:243px;font-size:13.7px;transform:scaleX(1.1143);">Imprimir</span>
<span class="t pb blue" style="left:1671.90px;top:243px;font-size:13.7px;transform:scaleX(1.0799);">Salvar</span>
<span class="t pb blue" style="left:1720.34px;top:243px;font-size:13.7px;transform:scaleX(1.1029);">arquivo</span>
<span class="t pb lbl" style="left:1333.71px;top:306px;font-size:15px;transform:scaleX(1.0925);">Enviar</span>
<span class="t pb lbl" style="left:1387.88px;top:306px;font-size:15px;transform:scaleX(1.1246);">por</span>
<span class="t pb lbl" style="left:1420.40px;top:306px;font-size:15px;transform:scaleX(1.1665);">whatsapp</span>
<span class="t pb lbl" style="left:1333.71px;top:401px;font-size:15px;transform:scaleX(1.0925);">Enviar</span>
<span class="t pb lbl" style="left:1387.88px;top:401px;font-size:15px;transform:scaleX(1.1246);">por</span>
<span class="t pb lbl" style="left:1419.46px;top:401px;font-size:15px;transform:scaleX(1.2919);">e-mail</span>
<span class="t ph" style="left:1353.57px;top:346px;font-size:17px;transform:scaleX(1.0241);">Insira</span>
<span class="t ph" style="left:1400.81px;top:346px;font-size:17px;transform:scaleX(1.0724);">o</span>
<span class="t ph" style="left:1415.60px;top:346px;font-size:17px;transform:scaleX(1.0464);">número</span>
<span class="t ph" style="left:1480.79px;top:346px;font-size:17px;transform:scaleX(0.9958);">para</span>
<span class="t ph" style="left:1519.54px;top:346px;font-size:17px;transform:scaleX(1.0402);">envio</span>
<span class="t ph" style="left:1353.57px;top:441px;font-size:17px;transform:scaleX(1.0241);">Insira</span>
<span class="t ph" style="left:1400.81px;top:441px;font-size:17px;transform:scaleX(1.0724);">o</span>
<span class="t ph" style="left:1415.57px;top:441px;font-size:17px;transform:scaleX(1.1343);">e-mail</span>
<span class="t ph" style="left:1471.79px;top:441px;font-size:17px;transform:scaleX(0.9989);">para</span>
<span class="t ph" style="left:1510.44px;top:441px;font-size:17px;transform:scaleX(1.0351);">envio</span>
<div class="a" style="left:1307px;top:139px;width:485px;height:341px;border:9px solid #fe0000;filter:drop-shadow(2.7px 2.7px 2.8px rgba(0,14,14,.8)) drop-shadow(0 0 3px rgba(0,12,12,.2))"></div>
</section>
<footer class="pagination">
<div class="a" style="left:1492px;top:882px;width:93px;height:41.5px;border:1px solid #c9cdd3;border-radius:9px;background:#fff"></div>
<svg class="a" style="left:1552px;top:897px" width="16" height="14" viewBox="0 0 16 14"><path d="M3.6 5 L8 9.4 L12.4 5" stroke="#1e5eff" stroke-width="1.4" fill="none" stroke-linecap="round" stroke-linejoin="round"/></svg>
<div class="a" style="left:1662px;top:883px;width:23px;height:42px;border-radius:4px;background:#b3c7fb"></div>
<svg class="a" style="left:1610px;top:897px" width="14" height="14" viewBox="0 0 14 14"><path d="M6.1 3.5 L2.8 7 L6.1 10.4 M10.4 3.5 L7.1 7 L10.4 10.4" stroke="#c3c7cc" stroke-width="1.4" fill="none" stroke-linecap="round" stroke-linejoin="round"/></svg>
<svg class="a" style="left:1640px;top:897px" width="14" height="14" viewBox="0 0 14 14"><path d="M9 3 L5 7 L9 11" stroke="#c3c7cc" stroke-width="1.4" fill="none" stroke-linecap="round" stroke-linejoin="round"/></svg>
<svg class="a" style="left:1740px;top:897px" width="14" height="14" viewBox="0 0 14 14"><path d="M4.8 3 L8.8 7 L4.8 11" stroke="#2a2aff" stroke-width="1.4" fill="none" stroke-linecap="round" stroke-linejoin="round"/></svg>
<svg class="a" style="left:1770px;top:897px" width="14" height="14" viewBox="0 0 14 14"><path d="M3.6 3.5 L6.9 7 L3.6 10.4 M7.9 3.5 L11.2 7 L7.9 10.4" stroke="#2a2aff" stroke-width="1.4" fill="none" stroke-linecap="round" stroke-linejoin="round"/></svg>
<span class="t most" style="left:1312.50px;top:895px;font-size:17px;transform:scaleX(1.0436);">Mostrando</span>
<span class="t most" style="left:1400.58px;top:895px;font-size:17px;transform:scaleX(1.0454);">10</span>
<span class="t most" style="left:1425.66px;top:895px;font-size:17px;transform:scaleX(0.9937);">de</span>
<span class="t most" style="left:1449.40px;top:895px;font-size:17px;transform:scaleX(1.1366);">560</span>
<span class="t sel" style="left:1519.70px;top:895px;font-size:17px;transform:scaleX(1.1041);">10</span>
<span class="t pb blue" style="left:1670.19px;top:895px;font-size:13.8px;transform:scaleX(0.7312);">1</span>
<span class="t pb blue" style="left:1692.76px;top:895px;font-size:13.8px;transform:scaleX(1.0668);">2</span>
<span class="t pb blue" style="left:1715.41px;top:895px;font-size:13.8px;transform:scaleX(1.0989);">3</span>
</footer>
</body></html>
